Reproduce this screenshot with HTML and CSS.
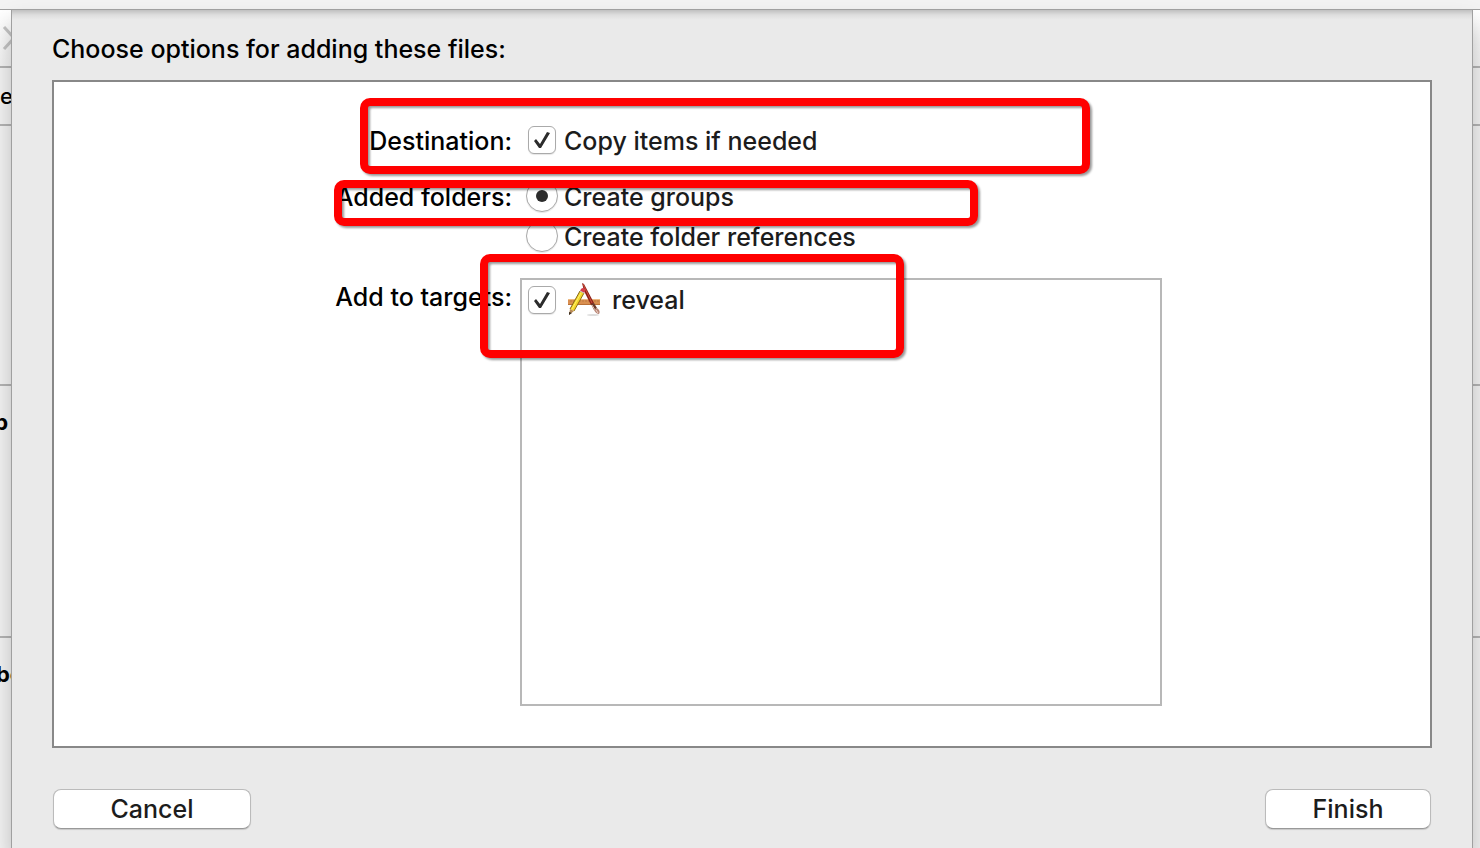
FILE: index.html
```html
<!DOCTYPE html>
<html lang="en">
<head>
    <meta charset="UTF-8">
    <meta name="viewport" content="width=device-width, initial-scale=1.0">
    <title>Add Files</title>
    <link rel="stylesheet" href="styles.css">
</head>
<body>
    <!-- Window behind the sheet -->
    <div class="backdrop">
        <div class="row toolbar"></div>
        <div class="row tabs">
            <svg class="chevron" width="12" height="26" viewBox="0 0 12 26">
                <path d="M4 2 L14 13 L4 24" fill="none" stroke="#c4c4c4" stroke-width="3"/>
            </svg>
        </div>
        <div class="row path"><span>e</span></div>
        <div class="row section"></div>
        <div class="row section heading"><b class="clipped">p</b></div>
        <div class="row heading"><b class="cut">be</b></div>
    </div>

    <form class="sheet">
        <h1>Choose options for adding these files:</h1>

        <div class="panel">
            <div class="options">
                <label class="name" for="copy">Destination:</label>
                <div class="field">
                    <input type="checkbox" id="copy" checked>
                    <label for="copy">Copy items if needed</label>
                </div>

                <span class="name folders-name" id="folders">Added folders:</span>
                <div class="radios" role="radiogroup" aria-labelledby="folders">
                    <div class="field">
                        <input type="radio" name="folders" id="groups" checked>
                        <label for="groups">Create groups</label>
                    </div>
                    <div class="field">
                        <input type="radio" name="folders" id="references">
                        <label for="references">Create folder references</label>
                    </div>
                </div>

                <span class="name targets-name" id="targets">Add to targets:</span>
                <div class="targets" role="group" aria-labelledby="targets">
                    <div class="field">
                        <input type="checkbox" id="reveal" checked>
                        <label class="target" for="reveal">
                            <svg class="app-icon" width="36" height="36" viewBox="0 0 36 36">
                                <ellipse cx="27" cy="33" rx="6" ry="1" fill="#ddd"/>
                                <path d="M2 17 H34 V23 H2 Z" fill="#d98f50"/>
                                <path d="M2 17 H34 V18 H2 Z" fill="#edb982"/>
                                <path d="M2 22 H34 V23 H2 Z" fill="#b97037"/>
                                <path d="M5 18v2M8 18v2M11 18v2M14 18v2M17 18v2M20 18v2M23 18v2M26 18v2M29 18v2M32 18v2" stroke="#ad6b37" stroke-width="0.6"/>
                                <path d="M16 1 L18 2 L28 21 L25 23 L18 9 Z" fill="#8f2018"/>
                                <path d="M17 2 L26 21" stroke="#c9513f" stroke-width="1"/>
                                <path d="M25 22 L28 21 L31 26 L28 28 Z" fill="#6b3a2c"/>
                                <path d="M26 23 L29 28" stroke="#e7c4b0" stroke-width="1"/>
                                <path d="M28 28 L31 26 Q35 29 33 32 Q30 32 28 28 Z" fill="#b98778"/>
                                <path d="M30 28 L32 31" stroke="#efd5c8" stroke-width="1"/>
                                <path d="M14 9 L18 11 L8 29 L4 27 Z" fill="#f4d62c"/>
                                <path d="M14 9 L4 27" stroke="#85661a" stroke-width="1"/>
                                <path d="M18 11 L8 29" stroke="#8f7018" stroke-width="1"/>
                                <path d="M15 11 L6 27" stroke="#fff36a" stroke-width="1"/>
                                <path d="M15 7 Q17 5 19 7 Q20 9 18 11 L14 9 Z" fill="#d73d4c"/>
                                <path d="M14 9 L18 11" stroke="#c9c9c9" stroke-width="1"/>
                                <path d="M4 27 L8 29 L3 33 Z" fill="#b98a58"/>
                                <path d="M3 30 L6 31 L3 33 Z" fill="#3d3021"/>
                            </svg>
                            reveal
                        </label>
                    </div>
                </div>

                <div class="mark mark-destination"></div>
                <div class="mark mark-folders"></div>
                <div class="mark mark-targets"></div>
            </div>
        </div>

        <div class="buttons">
            <button type="button" class="cancel">Cancel</button>
            <button type="button" class="finish">Finish</button>
        </div>
    </form>
</body>
</html>
```
FILE: styles.css
```css
* {
    box-sizing: border-box;
}

body {
    margin: 0;
    min-height: 100vh;
    display: grid;
    overflow: hidden;
    background-color: #f3f3f3;
    color: #000;
    font-family: Inter, "Liberation Sans", sans-serif;
    font-size: 25px;
    font-weight: 500;
    line-height: 32px;
}

/* the sheet hangs over the window, both share one grid cell */
.backdrop,
.sheet {
    grid-area: 1 / 1;
}

.backdrop {
    display: flex;
    flex-direction: column;
    overflow: hidden;
    font-size: 22px;
}

.row {
    display: flex;
    align-items: center;
    border-bottom: 2px solid #b4b4b4;
}

.row:last-child {
    border-bottom: 0;
}

.toolbar {
    height: 10px;
    border-bottom: 1px solid #a0a0a0;
}

.tabs {
    height: 58px;
    background: linear-gradient(#fff, #f3f3f3);
}

.path {
    height: 58px;
}

.section {
    height: 260px;
}

.section.heading {
    height: 252px;
}

.heading {
    align-items: flex-start;
    padding-top: 20px;
}

.clipped {
    display: flex;
    justify-content: flex-end;
    width: 8px;
}

.cut {
    margin-left: -4px;
}

.sheet {
    display: flex;
    flex-direction: column;
    margin: 10px 8px 0 12px;
    padding: 22px 40px 19px;
    background: linear-gradient(#c0c0c0, #dedede 5px, #eaeaea 10px);
    box-shadow: 0 0 0 1px #a0a0a0, 0 14px 22px rgba(0, 0, 0, 0.25);
    z-index: 1;
}

h1 {
    margin: 0 0 14px;
    font-size: 25px;
    font-weight: 500;
    line-height: 34px;
}

.panel {
    flex: 1;
    display: flex;
    justify-content: center;
    background-color: #fff;
    border: 2px solid #888;
}

.options {
    position: relative;
    display: grid;
    grid-template-columns: 190px minmax(0, 642px);
    grid-template-rows: auto auto 1fr;
    column-gap: 8px;
    padding: 42px 0 40px;
}

.name {
    height: 32px;
    line-height: 34px;
    text-align: right;
    white-space: nowrap;
}

.field {
    display: flex;
    align-items: center;
    gap: 8px;
    height: 32px;
    padding-left: 8px;
    color: #1c1c1c;
    line-height: 34px;
}

.field label {
    height: 32px;
}

.radios {
    display: flex;
    flex-direction: column;
    gap: 8px;
}

.radios,
.folders-name {
    margin-top: 24px;
}

.radios .field {
    gap: 6px;
    padding-left: 6px;
}

.targets {
    margin-top: 26px;
    padding-top: 4px;
    border: 2px solid #b8b8b8;
}

.targets-name {
    margin-top: 28px;
}

.targets .field {
    gap: 10px;
    padding-left: 6px;
}

.field .target {
    display: flex;
    align-items: center;
    gap: 10px;
    height: 34px;
}

input {
    appearance: none;
    flex: none;
    display: grid;
    place-items: center;
    margin: 0;
    background-color: #fff;
    border: 1px solid #aaa;
    box-shadow: 0 1px 1px rgba(0, 0, 0, 0.1);
}

input[type="checkbox"] {
    width: 28px;
    height: 28px;
    border-radius: 6px;
}

input[type="checkbox"]:checked::before {
    content: "";
    width: 18px;
    height: 18px;
    background-color: #2c2c2c;
    clip-path: path("M1 10 L3 8 L7 13 L14 1 L17 2 L8 17 L6 17 Z");
}

input[type="radio"] {
    width: 32px;
    height: 32px;
    border-radius: 50%;
}

input[type="radio"]:checked::before {
    content: "";
    width: 12px;
    height: 12px;
    border-radius: 50%;
    background-color: #2c2c2c;
}

/* red frames drawn over the options */
.mark {
    position: absolute;
    border: 8px solid #f00;
    border-radius: 10px;
    filter: drop-shadow(2px 2px 1px rgba(0, 0, 0, 0.4));
    pointer-events: none;
}

.mark-destination {
    top: 16px;
    left: 38px;
    width: 730px;
    height: 76px;
}

.mark-folders {
    top: 98px;
    left: 12px;
    width: 644px;
    height: 46px;
}

.mark-targets {
    top: 172px;
    left: 158px;
    width: 424px;
    height: 104px;
}

.buttons {
    display: flex;
    justify-content: space-between;
    margin-top: 41px;
    padding: 0 1px;
}

button {
    height: 40px;
    padding: 0;
    background-color: #fff;
    border: 1px solid #bbb;
    border-bottom-color: #999;
    border-radius: 8px;
    box-shadow: 0 1px 1px rgba(0, 0, 0, 0.15);
    color: #1c1c1c;
    font: inherit;
}

.cancel {
    width: 198px;
}

.finish {
    width: 166px;
}
```
